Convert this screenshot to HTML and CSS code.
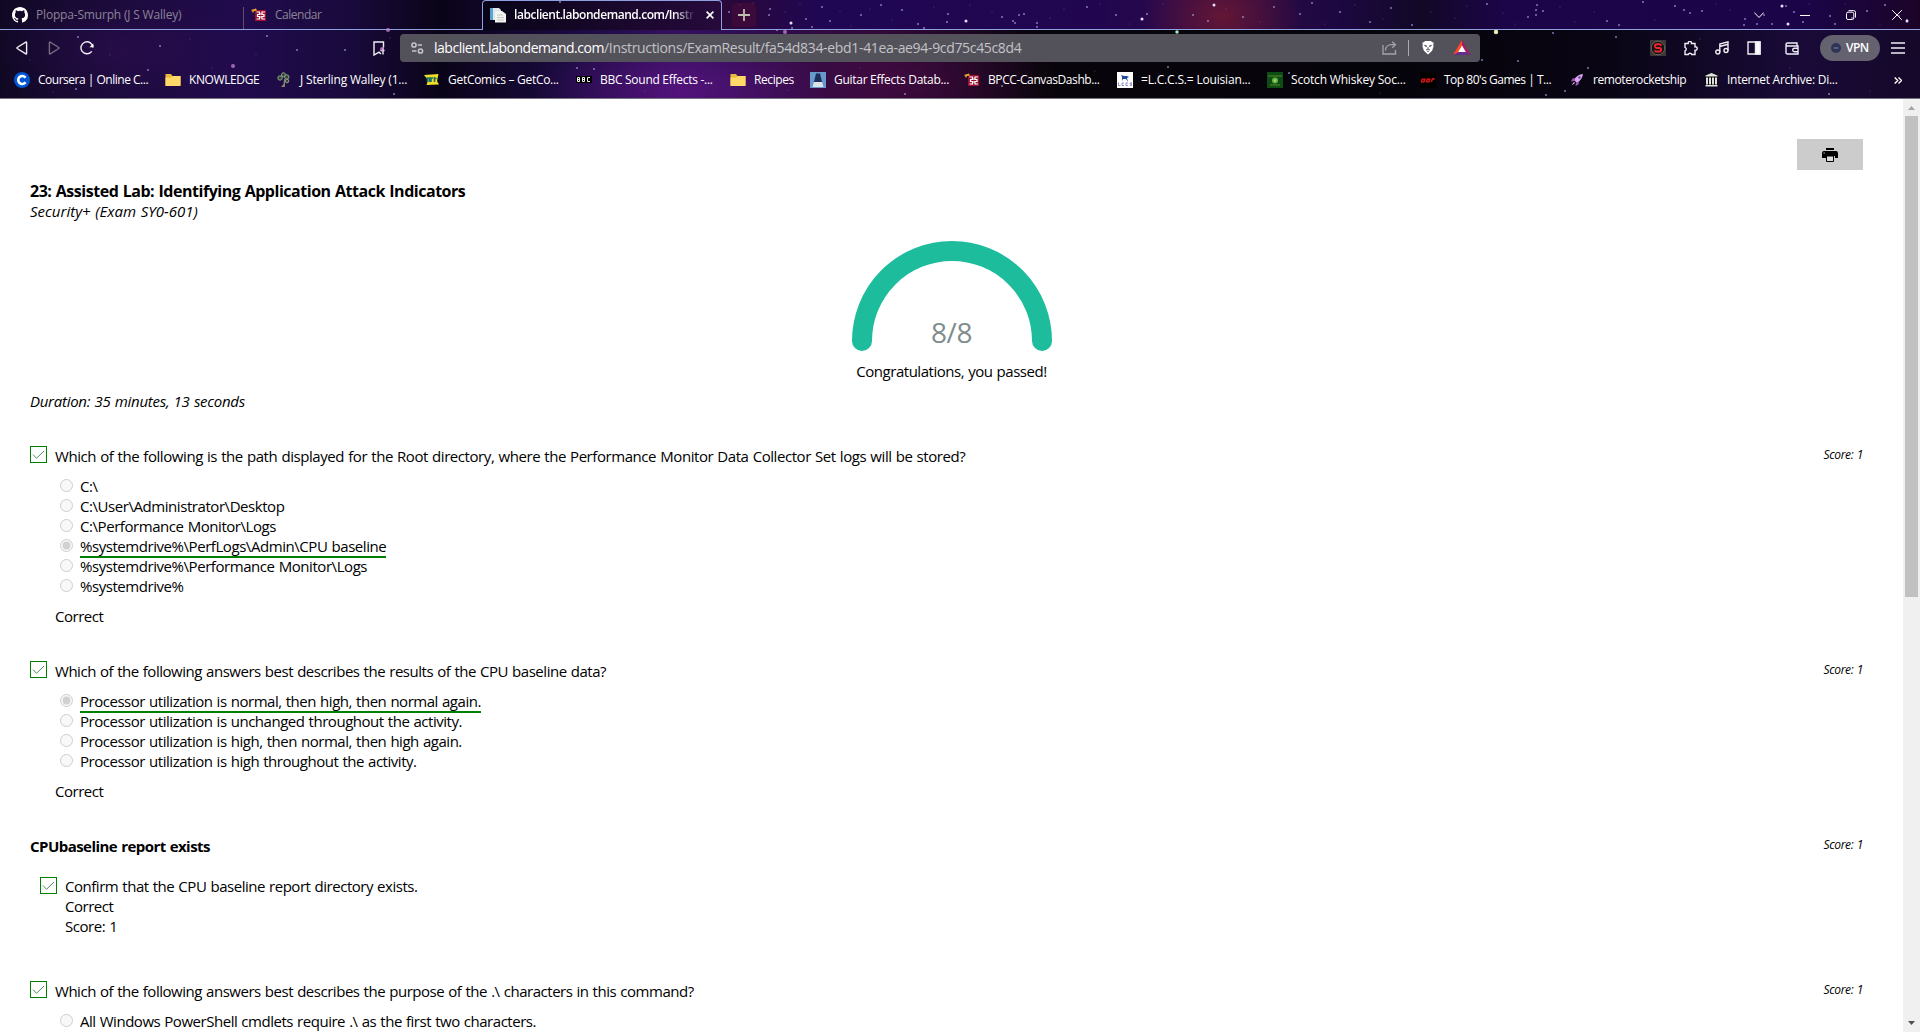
FILE: index.html
```html
<!DOCTYPE html>
<html lang="en">
<head>
<meta charset="utf-8">
<title>Exam Result</title>
<link rel="stylesheet" href="styles.css">
</head>
<body>
<header class="browser">
  <svg class="sky" width="1920" height="98" viewBox="0 0 1920 98" fill="none" stroke-linecap="round" aria-hidden="true">
    <g stroke="#a79be8" stroke-width="2" opacity=".75">
      <path d="M160 46h.01M267 36h.01M297 50h.01M345 50h.01M394 94h.01M78 37h.01M148 70h.01M76 89h.01M594 69h.01M577 68h.01M560 2h.01M905 94h.01M1002 86h.01M1168 67h.01M1289 73h.01M1002 61h.01M1518 61h.01M1553 33h.01M1482 60h.01M1546 95h.01M1565 91h.01M1829 94h.01M1588 68h.01M1616 37h.01"/>
      <path d="M729 12h.01M770 9h.01M769 15h.01M791 23h.01M792 28h.01M777 30h.01M806 19h.01M822 7h.01M812 27h.01M861 15h.01M830 21h.01M918 24h.01M924 28h.01M948 14h.01M947 22h.01M902 10h.01M881 5h.01M1002 17h.01M1013 21h.01M1019 15h.01M1024 14h.01M1015 23h.01M1037 23h.01M1037 27h.01M1087 7h.01M1116 15h.01M1147 14h.01M1208 21h.01M1193 15h.01M1243 17h.01M1274 7h.01M1300 14h.01M1312 3h.01M1340 12h.01M1370 22h.01M1391 8h.01M1412 25h.01"/>
      <path d="M1487 4h.01M1537 5h.01M1536 10h.01M1543 11h.01M1536 15h.01M1528 17h.01M1607 21h.01M1619 25h.01M1643 2h.01M1675 6h.01M1684 10h.01M1690 13h.01M1702 11h.01M1745 19h.01M1744 25h.01M1757 24h.01M1764 15h.01M1772 24h.01M1786 6h.01M1794 12h.01M1803 22h.01M1830 16h.01M1835 24h.01M1852 18h.01M1867 11h.01M1885 5h.01M1899 16h.01M1907 20h.01"/>
    </g>
    <g stroke="#7d68c8" stroke-width="1.2" opacity=".6">
      <path d="M740 5h.01M753 3h.01M785 12h.01M800 4h.01M840 11h.01M851 26h.01M870 9h.01M892 20h.01M934 7h.01M970 5h.01M992 12h.01M1050 18h.01M1064 9h.01M1100 4h.01M1130 24h.01M1163 4h.01M1226 9h.01M1260 22h.01M1325 24h.01M1355 5h.01M1383 19h.01M1431 12h.01M1455 18h.01M1467 6h.01M1503 13h.01M1515 24h.01M1560 7h.01M1575 22h.01M1594 12h.01M1655 20h.01M1716 4h.01M1730 10h.01M1809 4h.01M1845 4h.01M1880 24h.01M30 60h.01M53 92h.01M110 55h.01M190 39h.01M212 68h.01M256 54h.01M330 88h.01M390 38h.01M645 91h.01M788 90h.01M860 68h.01M1095 71h.01M1380 93h.01M1700 39h.01M1790 68h.01M1870 91h.01"/>
    </g>
    <g stroke="#e6ddff" stroke-width="3"><path d="M966 21h.01M791 23h.01M1142 19h.01M1214 5h.01M1782 6h.01M1788 24h.01M1907 21h.01"/></g>
    <path d="M233 66h.01M382 49h.01M388 30h.01M785 32h.01" stroke="#d690d8" stroke-width="4" opacity=".7"/>
    <path d="M1177 32h.01" stroke="#9aefc4" stroke-width="3.5"/>
    <path d="M1496 32h.01" stroke="#ece9b4" stroke-width="4.5"/>
  </svg>

  <div class="tabs">
    <div class="tab tab-github">
      <svg width="16" height="16" viewBox="0 0 16 16" fill="#fff"><path d="M8 0C3.58 0 0 3.58 0 8c0 3.54 2.29 6.53 5.47 7.59.4.07.55-.17.55-.38 0-.19-.01-.82-.01-1.49-2.01.37-2.53-.49-2.69-.94-.09-.23-.48-.94-.82-1.13-.28-.15-.68-.52-.01-.53.63-.01 1.08.58 1.23.82.72 1.21 1.87.87 2.33.66.07-.52.28-.87.51-1.07-1.78-.2-3.64-.89-3.64-3.95 0-.87.31-1.59.82-2.15-.08-.2-.36-1.02.08-2.12 0 0 .67-.21 2.2.82a7.6 7.6 0 0 1 4 0c1.53-1.04 2.2-.82 2.2-.82.44 1.1.16 1.92.08 2.12.51.56.82 1.27.82 2.15 0 3.07-1.87 3.75-3.65 3.95.29.25.54.73.54 1.48 0 1.07-.01 1.93-.01 2.2 0 .21.15.46.55.38A8 8 0 0 0 16 8c0-4.42-3.58-8-8-8z"/></svg>
      <span class="t1">Ploppa-Smurph (J S Walley)</span>
    </div>
    <div class="tab tab-calendar">
      <svg width="16" height="16" viewBox="0 0 16 16"><path d="M4 3h11v11H4z" fill="#9c1032"/><path d="M0 3l5-1.500 1 2-3 .5-1 2-1-2z" fill="#e3a92b"/><path d="M5.500 5h3v2.500h-2v2h2V12h-3M14 5h-3v2.500h2v2h-2V12h3M8.500 7h2.500M8.500 10h2.500" fill="none" stroke="#fff" stroke-width="1.200"/></svg>
      <span class="t4">Calendar</span>
    </div>
    <div class="tab tab-active">
      <svg width="16" height="16" viewBox="0 0 16 16"><path d="M0 1h9l2 2v10H0z" fill="#dfe6ea"/><path d="M0 1h3v12H0z" fill="#58a5cf"/><path d="M5 4h7l4 3v8.500H5z" fill="#f4f4f0"/><path d="M7 8h6M7 10.500h7M7 13h7" stroke="#c3c8c6"/></svg>
      <span class="active-title">labclient.labondemand.com/Instr</span>
      <svg class="tab-close" width="8" height="8" viewBox="0 0 8 8" stroke="#fff" stroke-width="1.600"><path d="M.6.6l6.800 6.800M7.400.6L.6 7.400"/></svg>
    </div>
    <div class="strip">
      <div class="new-tab"><svg width="12" height="12" viewBox="0 0 12 12" stroke="#c0bcae" stroke-width="1.800"><path d="M6 0v12M0 6h12"/></svg></div>
      <div class="window-buttons">
        <svg width="10" height="10" viewBox="0 0 10 10"><path d="M.3 2.500L5 7.500l4.700-5"/></svg>
        <svg width="10" height="10" viewBox="0 0 10 10"><path d="M0 5.500h10"/></svg>
        <svg width="10" height="10" viewBox="0 0 10 10"><rect x=".5" y="2.200" width="7.300" height="7.300" rx="1.500"/><path d="M2.500.6h5.200q1.800 0 1.800 1.800v5.100"/></svg>
        <svg width="10" height="10" viewBox="0 0 10 10"><path d="M.2.2l9.600 9.600M9.800.2L.2 9.800"/></svg>
      </div>
    </div>
  </div>

  <div class="toolbar">
    <div class="nav">
      <svg width="12" height="14" viewBox="0 0 12 14"><path d="M10.600 1.600v10.800q0 .8-.8.4L1.200 7.500q-.6-.5 0-1L9.800 1.200q.8-.4.8.4z"/></svg>
      <svg class="off" width="12" height="14" viewBox="0 0 12 14"><path d="M1.400 1.600v10.800q0 .8.8.4l8.600-5.300q.6-.5 0-1L2.200 1.200q-.8-.4-.8.4z"/></svg>
      <svg width="14" height="14" viewBox="0 0 14 14"><path d="M11.800 10.400A6 6 0 1 1 13 6.500"/><path class="solid" d="M9.500 6.200h3.800V2.400z"/></svg>
    </div>
    <svg class="save" width="12" height="15" viewBox="0 0 12 15"><path d="M8 13l-2-1.800L1 14V1h9.500v5.500"/><path d="M10 6.500v7M7.500 9.500h4"/></svg>
    <div class="address">
      <svg class="tune" width="13" height="12" viewBox="0 0 13 12"><circle cx="3" cy="3" r="2.100"/><path d="M6.800 3H11M1 9h4.500"/><circle cx="9.500" cy="9" r="2.100"/></svg>
      <span class="url"><b>labclient.labondemand.com</b>/Instructions/ExamResult/fa54d834-ebd1-41ea-ae94-9cd75c45c8d4</span>
      <div class="address-icons">
        <svg class="share" width="15" height="14" viewBox="0 0 15 14"><path d="M1 4v9h12.500V9M3.500 9.500C3.500 6 6 3.700 9.500 3.700h3.800M10.200.7l3.300 3-3.300 3"/></svg>
        <i class="rule"></i>
        <svg class="shield" width="12" height="14" viewBox="0 0 12 14"><path class="solid" d="M3 0h6l1.200 1.300 1.500.3-.5 2.200.4 1.400-1.500 4.600L6 13.500 1.900 9.800.4 5.200l.4-1.400L.3 1.600l1.500-.3z"/><path class="face" d="M2.500 4.200l2.300.8-.6.900zM9.500 4.200L7.200 5l.6.900zM6 6v2M4 9l2-.9L8 9M5 10.500l1-.5 1 .5"/></svg>
        <svg class="rewards" width="18" height="16" viewBox="0 0 18 16"><path d="M9 0L0 15l9-4.500z" fill="#ff4724"/><path d="M9 0l9 15-6-3L9 6z" fill="#9e1f63"/><path d="M0 15h18l-6-3H6z" fill="#662d91"/><path d="M9 5.500L12.800 12H5.200z" fill="#fff"/></svg>
      </div>
    </div>
    <div class="extensions">
      <svg width="16" height="16" viewBox="0 0 16 16"><path d="M0 0h16v16H0z" fill="#3b3937" stroke="none"/><circle cx="8" cy="8" r="6.800" fill="#151515" stroke="#77706c" stroke-width=".8"/><path d="M11 5.800Q11 4.300 9.500 4.300h-3Q5 4.300 5 6t1.500 1.900h3Q11 7.900 11 9.700t-1.500 1.900h-3Q5 11.600 5 10.200" stroke="#f0222c" stroke-width="2"/></svg>
      <svg width="15" height="15" viewBox="0 0 15 15"><path d="M2 2.500h3.200a1.700 1.700 0 1 1 3.300 0H12v3.300a1.800 1.800 0 1 1 0 3.500V13.500H8.800a1.900 1.900 0 0 0-3.600 0H2v-3.600a1.900 1.900 0 0 0 0-3.600z"/></svg>
      <svg width="14" height="14" viewBox="0 0 14 14"><circle cx="2.800" cy="11" r="2"/><circle cx="11" cy="9.500" r="2"/><path d="M4.800 11V3L13 .8v8.700M4.800 5.500L13 3.300"/></svg>
      <svg width="14" height="14" viewBox="0 0 14 14"><path d="M1 1h12v12H1z"/><path d="M8.500 1H13v12H8.500z" fill="#fff"/></svg>
      <svg width="14" height="13" viewBox="0 0 14 13"><path d="M12 3.500V1H2.500a1.500 1.500 0 0 0 0 3H13v8H2.500Q1 12 1 10.500v-8M13 6.200H9.500a1.800 1.800 0 0 0 0 3.600H13"/></svg>
    </div>
    <div class="vpn"><svg width="10" height="10" viewBox="0 0 10 10"><circle class="dot" cx="5" cy="5" r="5"/><path class="bar" d="M2.500 5h5"/></svg><span>VPN</span></div>
    <svg class="menu" width="14" height="12" viewBox="0 0 14 12"><path d="M0 1h14M0 6h14M0 11h14"/></svg>
  </div>

  <nav class="bookmarks">
    <a><svg viewBox="0 0 16 16"><circle cx="8" cy="8" r="8" fill="#0056d2"/><path d="M11.500 10.300A4 4 0 1 1 11.500 5.700" fill="none" stroke="#fff" stroke-width="2.600"/></svg><span class="t4">Coursera | Online C...</span></a>
    <a><svg viewBox="0 0 16 16"><path d="M.5 2h5.500l1.500 2h8v9.500H.5z" fill="#e9b93b"/><path d="M.5 5.500h5.800L8 4h7.500v10H.5z" fill="#ffd867"/></svg><span class="t3">KNOWLEDGE</span></a>
    <a><svg viewBox="0 0 16 16"><path d="M8 7l-.5 5L5 15h4V7" fill="#8f806c"/><g fill="#344433" stroke="#8aa489" stroke-width="1"><circle cx="7.500" cy="2.800" r="2"/><circle cx="4" cy="6" r="2.200"/><circle cx="10.800" cy="5" r="2.200"/><circle cx="11" cy="9" r="1.800"/></g></svg><span class="t1">J Sterling Walley (1...</span></a>
    <a><svg viewBox="0 0 16 16"><path d="M0 3l14.500-1L13 9l2 3.500L2.500 13 4 8z" fill="#f0dd27"/><path d="M3.500 10V6h2v4M7 10V6h2M10.500 5v5M9.500 6.500h3" fill="none" stroke="#176f66" stroke-width="1.600"/></svg><span class="t2">GetComics – GetCo...</span></a>
    <a><svg viewBox="0 0 16 16"><path d="M0 4h16v7H0z" fill="#000"/><g fill="none" stroke="#eee" stroke-width="1"><path d="M1.500 5.500v4h2v-4zM1.500 7.500h2M6.500 5.500v4h2v-4zM6.500 7.500h2M14 5.500h-2.500v4H14"/></g></svg><span class="t2">BBC Sound Effects -...</span></a>
    <a><svg viewBox="0 0 16 16"><path d="M.5 2h5.500l1.500 2h8v9.500H.5z" fill="#e9b93b"/><path d="M.5 5.500h5.800L8 4h7.500v10H.5z" fill="#ffd867"/></svg><span class="t3">Recipes</span></a>
    <a><svg viewBox="0 0 16 16"><path d="M0 0h16v16H0z" fill="#6799cd"/><path d="M6 1.500h4L12 10H4z" fill="#1e2e58"/><path d="M4 10h8l1.500 5h-11z" fill="#dce4e8"/></svg><span class="t2">Guitar Effects Datab...</span></a>
    <a><svg viewBox="0 0 16 16"><path d="M4 3h11v11H4z" fill="#9c1032"/><path d="M0 3l5-1.500 1 2-3 .5-1 2-1-2z" fill="#e3a92b"/><path d="M5.500 5h3v2.500h-2v2h2V12h-3M14 5h-3v2.500h2v2h-2V12h3M8.500 7h2.500M8.500 10h2.500" fill="none" stroke="#fff" stroke-width="1.200"/></svg><span class="t3">BPCC-CanvasDashb...</span></a>
    <a><svg viewBox="0 0 16 16"><path d="M0 0h16v16H0z" fill="#fff"/><path d="M4 3l3 1h3l2 1-2 1 1 4-2-3-3 0-1 2V5z" fill="#1f4a9c"/><path d="M1.500 10.500v3h2M7 11H5v2.500h2M11 11H9v2.500h2M15 11h-2v1h1.500v1.500H13" fill="none" stroke="#8d8fc0"/></svg><span class="t1">=L.C.C.S.= Louisian...</span></a>
    <a><svg viewBox="0 0 16 16"><path d="M0 0h16v16H0z" fill="#0b4d12"/><path d="M1 4h14M3 13h10" stroke="#5e8627"/><circle cx="8" cy="8.500" r="3" fill="#5cb04c"/><circle cx="8" cy="8.500" r="1.200" fill="#b6cc59"/></svg><span class="t1">Scotch Whiskey Soc...</span></a>
    <a><svg viewBox="0 0 16 16"><path d="M0 0h16v16H0z" fill="#000"/><path d="M1.500 9.800l.8-2.600h2.500L4 9.800zM6.500 9.800l.8-2.600h2.500L9 9.800zM11.500 10l.8-3h2.500" fill="none" stroke="#ec1515" stroke-width="1.300"/></svg><span class="t4">Top 80's Games | T...</span></a>
    <a><svg viewBox="0 0 16 16"><path d="M14 2Q8 2.500 5 8l3 3q5-3 6-9z" fill="#dba8ee"/><path d="M6 6L3.500 6.500 2 9.500l3-.5zM10 10l-.5 2.500-3 1.500.5-3z" fill="#a54ec6"/><path d="M5 10l-2.500 3.500L6 11z" fill="#f0d7f6"/><circle cx="10.500" cy="5.500" r="1.200" fill="#6f3b9c"/></svg><span class="t3">remoterocketship</span></a>
    <a><svg viewBox="0 0 16 16"><path d="M2 1h13v14H2z" fill="#090909"/><path d="M8.500 1L2.500 3.500v1h12v-1zM3 5.500h2v7H3zM6 5.500h2v7H6zM9 5.500h2v7H9zM12 5.500h2v7h-2zM2.500 13h12v1.500h-12z" fill="#e0e0e0"/></svg><span class="t2">Internet Archive: Di...</span></a>
    <svg class="more" viewBox="0 0 8 7"><path d="M.7.5l3 3-3 3M4.500.5l3 3-3 3" fill="none" stroke="#fff" stroke-width="1.400"/></svg>
  </nav>
</header>

<div class="viewport">
  <main class="report">
    <button class="print" aria-label="Print"><svg width="16" height="14" viewBox="0 0 16 14"><path d="M4 0h8v2H4zM2 3h12q2 0 2 2v5h-3V8H4v2H0V5q0-2 2-2z"/><path d="M4.500 8h7v5.500h-7z" fill="#ddd" stroke="#000"/><path d="M1.500 4.500h1.300v1H1.500z" fill="#ccc"/></svg></button>
    <h1>23: Assisted Lab: Identifying Application Attack Indicators</h1>
    <p class="series">Security+ (Exam SY0-601)</p>
    <div class="gauge">
      <svg width="200" height="110" viewBox="0 0 200 110"><path d="M10 100a90 90 0 0 1 180 0" fill="none" stroke="#1dbc9d" stroke-width="20" stroke-linecap="round"/><text x="99.500" y="102" text-anchor="middle">8/8</text></svg>
      <p>Congratulations, you passed!</p>
    </div>
    <p class="duration">Duration: 35 minutes, 13 seconds</p>

    <section class="question first">
      <div class="prompt"><i class="check"><svg viewBox="0 0 15 15"><path d="M2 7.500l3.500 3.800L13 4"/></svg></i><p>Which of the following is the path displayed for the Root directory, where the Performance Monitor Data Collector Set logs will be stored?</p><em>Score: 1</em></div>
      <ul class="paths">
        <li><input type="radio" disabled><span>C:\</span></li>
        <li><input type="radio" disabled><span>C:\User\Administrator\Desktop</span></li>
        <li><input type="radio" disabled><span>C:\Performance Monitor\Logs</span></li>
        <li><input type="radio" disabled checked><span class="answer">%systemdrive%\PerfLogs\Admin\CPU baseline</span></li>
        <li><input type="radio" disabled><span>%systemdrive%\Performance Monitor\Logs</span></li>
        <li><input type="radio" disabled><span>%systemdrive%</span></li>
      </ul>
      <p class="result">Correct</p>
    </section>

    <section class="question">
      <div class="prompt"><i class="check"><svg viewBox="0 0 15 15"><path d="M2 7.500l3.500 3.800L13 4"/></svg></i><p>Which of the following answers best describes the results of the CPU baseline data?</p><em>Score: 1</em></div>
      <ul>
        <li><input type="radio" disabled checked><span class="answer">Processor utilization is normal, then high, then normal again.</span></li>
        <li><input type="radio" disabled><span>Processor utilization is unchanged throughout the activity.</span></li>
        <li><input type="radio" disabled><span>Processor utilization is high, then normal, then high again.</span></li>
        <li><input type="radio" disabled><span>Processor utilization is high throughout the activity.</span></li>
      </ul>
      <p class="result">Correct</p>
    </section>

    <section class="question group">
      <div class="prompt"><h2>CPUbaseline report exists</h2><em>Score: 1</em></div>
      <div class="task"><i class="check"><svg viewBox="0 0 15 15"><path d="M2 7.500l3.500 3.800L13 4"/></svg></i><div><p>Confirm that the CPU baseline report directory exists.</p><p>Correct</p><p>Score: 1</p></div></div>
    </section>

    <section class="question">
      <div class="prompt"><i class="check"><svg viewBox="0 0 15 15"><path d="M2 7.500l3.500 3.800L13 4"/></svg></i><p>Which of the following answers best describes the purpose of the .\ characters in this command?</p><em>Score: 1</em></div>
      <ul>
        <li><input type="radio" disabled><span>All Windows PowerShell cmdlets require .\ as the first two characters.</span></li>
      </ul>
    </section>
  </main>
  <div class="scrollbar">
    <svg width="7" height="4" viewBox="0 0 7 4" fill="#a3a3a3"><path d="M0 4l3.500-4L7 4z"/></svg>
    <div class="thumb"></div>
    <svg class="down" width="7" height="4" viewBox="0 0 7 4" fill="#505050"><path d="M0 0l3.500 4L7 0z"/></svg>
  </div>
</div>
</body>
</html>
```
FILE: styles.css
```css
* { box-sizing: border-box; }
body {
  margin: 0;
  height: 1032px;
  overflow: hidden;
  display: flex;
  flex-direction: column;
  background: #fff;
  color: #000;
  font: 15px/20px "Open Sans", "Noto Sans", sans-serif;
  letter-spacing: -.47px;
  word-spacing: .65px;
}
p, h1, h2, ul { margin: 0; padding: 0; }
svg { display: block; flex: none; }

/* browser chrome */
.browser {
  position: relative;
  flex: none;
  height: 99px;
  border-bottom: 1px solid #77727f;
  color: #fff;
  font-size: 12px;
  letter-spacing: -.3px;
  word-spacing: 0;
  white-space: nowrap;
  background:
    radial-gradient(ellipse 150px 60px at 680px 90px, #62148aaa, transparent),
    radial-gradient(ellipse 170px 70px at 890px 80px, #520c4a99, transparent),
    radial-gradient(ellipse 130px 70px at 120px 50px, #35105a77, transparent),
    linear-gradient(90deg, #100823, #210b4d 240px, #190a3c 350px, #0a0418 440px, #180a3c 560px, #33105e 680px, #280834 880px, #08040b 1040px, #06040b 1400px, #090513 1600px, #190a38 1800px, #150829);
}
.sky { position: absolute; inset: 0; z-index: 1; pointer-events: none; }
.tabs, .toolbar, .bookmarks { position: relative; }
.address, .vpn { z-index: 2; }

.tabs { display: flex; height: 30px; }
.tab { display: flex; align-items: center; gap: 8px; border-bottom: 1px solid #8fa0e0; color: #8b8496; padding: 1px 0 0 12px; }
.tab-github { width: 243px; }
.tab-calendar { width: 239px; position: relative; padding-left: 8px; }
.tab-calendar::before { content: ""; position: absolute; left: 0; top: 7px; height: 22px; border-left: 1px solid #5a5364; }
.tab-active {
  width: 240px;
  padding: 0 7px 1px 7px;
  border: 1px solid #8fa0e0;
  border-bottom: 0;
  border-radius: 4px 4px 0 0;
  color: #fff;
  font-weight: 600;
  letter-spacing: -.44px;
  background: linear-gradient(90deg, #080417, #260a3c);
}
.active-title {
  width: 184px;
  -webkit-mask-image: linear-gradient(90deg, #000 160px, transparent 181px);
  mask-image: linear-gradient(90deg, #000 160px, transparent 181px);
}
.tab-close { margin-left: 2px; }
.strip {
  flex: 1;
  display: flex;
  justify-content: space-between;
  align-items: center;
  padding: 0 18px 0 10px;
  border-bottom: 1px solid #8fa0e0;
  background:
    radial-gradient(ellipse 80px 60px at 500px 16px, #7a1c2cb0, transparent),
    linear-gradient(90deg, #2b0838, #200754 100px, #21064f 380px, #300a48 500px, #1c0840 620px, #120826 700px, #1c0548 780px, #1b0548 1080px, #1c0428);
}
.new-tab { display: grid; place-items: center; width: 24px; height: 24px; border-radius: 4px; background: #3b0a3a; }
.window-buttons { display: flex; gap: 36px; }
.window-buttons svg { fill: none; stroke: #fff; stroke-width: 1; }

.toolbar { display: flex; align-items: center; height: 36px; }
.toolbar svg { fill: none; stroke: #f0eef5; stroke-width: 1.4; }
.toolbar .solid { fill: #fff; stroke: none; }
.nav { display: flex; align-items: center; gap: 20px; margin-left: 16px; }
.nav .off { stroke: #746b80; }
.save { margin-left: 279px; }
.address { position: relative; display: flex; align-items: center; width: 1080px; height: 28px; margin-left: 15px; border-radius: 4px; background: #53525b; }
.toolbar .tune { margin-left: 11px; stroke: #c5c5cc; stroke-width: 1.5; }
.url { margin-left: 10px; font-size: 14px; letter-spacing: -.33px; color: #c3c2c6; }
.url b { font-weight: 400; letter-spacing: -.47px; color: #fff; }
.address-icons { display: flex; align-items: center; margin: 0 9px 0 auto; }
.toolbar .share { stroke: #a4a3aa; stroke-width: 1.3; }
.shield .face { stroke: #53515b; stroke-width: .9; }
.toolbar .rewards { margin-left: 19px; stroke: none; }
.rule { width: 1px; height: 16px; margin: 0 13px 0 11px; background: #aaa9b0; }
.extensions { display: grid; grid-template-columns: 33px 32px 32px 38px 38px; align-items: center; margin-left: 170px; }
.vpn { position: relative; display: flex; align-items: center; gap: 5px; width: 60px; height: 26px; margin-left: -3px; padding-left: 11px; border-radius: 13px; background: #64626f; font-weight: 600; letter-spacing: -.5px; }
.vpn .dot { fill: #2e3358; stroke: none; }
.vpn .bar { stroke: #68667b; stroke-width: 1.6; }
.toolbar .menu { margin-left: 11px; }

.bookmarks { display: grid; grid-template-columns: 151px 111px 148px 152px 154px 80px 154px 153px 150px 153px 149px 134px 1fr 8px; height: 28px; align-items: center; padding: 0 18px 0 14px; }
.bookmarks a { display: flex; align-items: center; gap: 8px; }
.bookmarks svg { width: 16px; height: 16px; }
.bookmarks .more { width: 8px; height: 7px; }
.t1 { letter-spacing: -.18px; }
.t2 { letter-spacing: -.28px; }
.t3 { letter-spacing: -.4px; }
.t4 { letter-spacing: -.49px; }

/* page */
.viewport { flex: 1; display: flex; min-height: 0; }
.report { flex: 1; padding: 40px 40px 0 30px; overflow: hidden; }
.print { display: grid; place-items: center; width: 66px; height: 31px; margin: 0 0 11px auto; padding: 0; border: 0; background: #ccc; }
h1 { font-size: 16px; line-height: 20px; font-weight: 700; letter-spacing: -.47px; }
h2 { font-size: 15px; line-height: 20px; letter-spacing: -.54px; }
.series { font-style: italic; letter-spacing: .01px; }
.gauge { display: flex; flex-direction: column; align-items: center; gap: 10px; margin: 20px -40px 10px -30px; }
.gauge text { font-size: 28px; letter-spacing: -.4px; fill: #7f8c8d; }
.duration { font-style: italic; letter-spacing: -.27px; }
.question { margin-top: 35px; }
.prompt { display: flex; align-items: flex-start; gap: 8px; }
.first .prompt p { letter-spacing: -.43px; }
.prompt em { margin: 1px 0 0 auto; font-size: 12px; line-height: 16px; letter-spacing: -.36px; }
.check { flex: none; width: 17px; height: 17px; border: 1px solid #008000; }
.check svg { fill: none; stroke: #4f8f5c; stroke-width: 1; }
ul { list-style: none; margin: 10px 0; }
li { display: flex; align-items: flex-start; gap: 7px; height: 20px; padding-left: 30px; }
li input { width: 13px; height: 13px; margin: 3px 0 0; }
.paths { letter-spacing: -.44px; }
.answer { box-shadow: 0 2px #008000; }
.result { padding-left: 25px; }
.task { display: flex; gap: 8px; margin: 20px 0 45px 10px; }
.task .check { margin-top: 1px; }

.scrollbar { display: flex; flex-direction: column; align-items: center; width: 17px; padding-top: 7px; background: #f0f0f0; }
.thumb { width: 13px; height: 481px; margin-top: 6px; background: #c1c1c1; }
.down { margin: auto 0 7px; }
```
